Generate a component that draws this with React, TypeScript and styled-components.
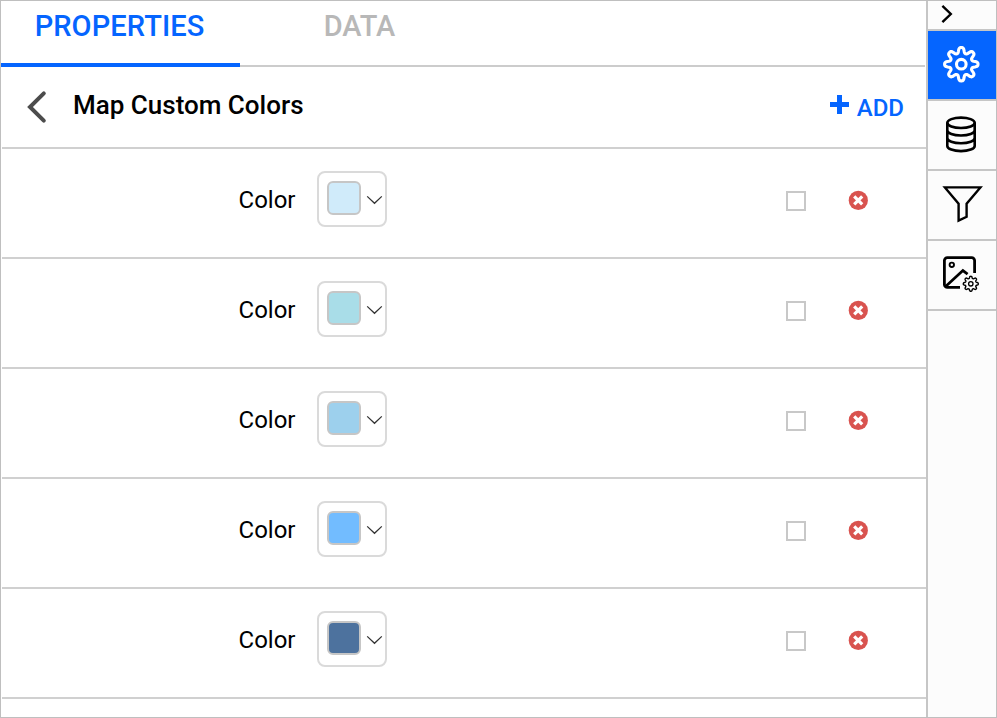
import React from 'react';
import styled, { createGlobalStyle } from 'styled-components';

const GlobalStyle = createGlobalStyle`
  * { box-sizing: border-box; }
  body { margin: 0; background: #fff; font-family: Roboto, "Open Sans", sans-serif; color: #000; }
  button { font: inherit; color: inherit; background: none; border: 0; padding: 0; margin: 0; cursor: pointer; }
  svg { display: block; flex: none; }
`;

const Frame = styled.div`
  display: flex;
  width: 997px;
  height: 718px;
  border: 1px solid #bfbfbf;
  overflow: hidden;
`;

const Panel = styled.main`
  width: 925px;
  flex: none;
  overflow: hidden;
`;

const Tabs = styled.nav`
  display: flex;
  width: 924px;
  height: 66px;
  background: linear-gradient(#ccc, #ccc) bottom / 100% 2px no-repeat;
`;

const Tab = styled.button<{ $active?: boolean }>`
  width: 239px;
  height: 66px;
  padding: ${p => (p.$active ? '0 2px 11px 0' : '0 0 11px 0')};
  border-bottom: ${p => (p.$active ? '4px solid #0565ff' : '4px solid transparent')};
  color: ${p => (p.$active ? '#0565ff' : '#b8b8b8')};
  font-size: 29px;
  line-height: 49px;
  font-weight: 500;
  letter-spacing: ${p => (p.$active ? '0.1px' : '0')};
`;

const Header = styled.header`
  display: flex;
  align-items: flex-start;
  height: 82px;
  margin-left: 1px;
  border-bottom: 2px solid #d0d0d0;
`;

const BackButton = styled.button`
  margin: 23px 0 0 24px;
`;

const Title = styled.h1`
  margin: 22px 0 0 25px;
  font-size: 26px;
  line-height: 32px;
  font-weight: 500;
  white-space: nowrap;
`;

const AddButton = styled.button`
  display: flex;
  align-items: flex-start;
  gap: 8px;
  margin: 26px 22px 0 auto;
  color: #0565ff;
  font-size: 24px;
  line-height: 30px;
  font-weight: 500;
`;

const PlusIcon = styled.svg`
  margin-top: 2px;
`;

const Rows = styled.ul`
  list-style: none;
  margin: 0 0 0 1px;
  padding: 0;
`;

const Row = styled.li`
  display: flex;
  align-items: flex-start;
  height: 110px;
  border-bottom: 2px solid #d0d0d0;
`;

const Label = styled.span`
  width: 294px;
  margin: 36px 21px 0 0;
  padding-right: 0.5px;
  text-align: right;
  font-size: 24px;
  line-height: 30px;
`;

const Picker = styled.button`
  display: flex;
  align-items: flex-start;
  width: 70px;
  height: 56px;
  margin-top: 22px;
  padding: 8px 0 0 8px;
  border: 2px solid #dadada;
  border-radius: 8px;
`;

const Swatch = styled.span<{ $color: string }>`
  width: 34px;
  height: 34px;
  border: 2px solid #c6c6c6;
  border-radius: 6px;
  background: ${p => p.$color};
`;

const Caret = styled.svg`
  margin: 13px 0 0 5px;
`;

const Checkbox = styled.input`
  appearance: none;
  width: 20px;
  height: 20px;
  margin: 42px 42px 0 auto;
  border: 2px solid #c8c8c8;
  background: #fff;
`;

const Remove = styled.button`
  margin: 41px 58px 0 0;
`;

const Sidebar = styled.aside`
  width: 70px;
  flex: none;
  border-left: 2px solid #c6c6c6;
  background: #fcfcfc;
`;

const Tool = styled.button<{ $active?: boolean; $short?: boolean }>`
  display: block;
  width: 68px;
  height: ${p => (p.$short ? 30 : 70)}px;
  border-bottom: 2px solid #c6c6c6;
  background: ${p => (p.$active ? '#0565ff' : '#fcfcfc')};
`;

const colors = ['#d0ebfa', '#a9dde8', '#9dd0ed', '#72bcff', '#4d729e'];

/* Outline of a gear with eight rounded teeth, centred on (cx, cy). */
function gearPath(cx: number, cy: number, mid: number, depth: number) {
  const points: string[] = [];
  for (let i = 0; i < 160; i++) {
    const a = (i / 160) * Math.PI * 2;
    const wave = Math.tanh(1.5 * Math.cos(8 * a)) / Math.tanh(1.5);
    const r = mid + depth * wave;
    points.push(`${(cx + r * Math.sin(a)).toFixed(2)} ${(cy - r * Math.cos(a)).toFixed(2)}`);
  }
  return `M${points.join('L')}Z`;
}

const line = { fill: 'none', stroke: 'currentColor' } as const;

const GearIcon = () => (
  <svg width="68" height="68" viewBox="0 0 68 68" color="#fff" {...line} strokeWidth="3.1" strokeLinejoin="round">
    <path d={gearPath(33.3, 33.2, 14, 2.7)} />
    <circle cx="33.3" cy="33.2" r="4.8" />
  </svg>
);

const DatabaseIcon = () => (
  <svg width="68" height="68" viewBox="0 0 68 68" {...line} strokeWidth="2.6">
    <ellipse cx="33" cy="21.8" rx="13.7" ry="5.2" />
    <path d="M19.3 21.8v23.1c0 2.9 6.1 5.2 13.7 5.2s13.7-2.3 13.7-5.2V21.8M19.3 29.3c0 2.9 6.1 5.2 13.7 5.2s13.7-2.3 13.7-5.2M19.3 37.1c0 2.9 6.1 5.2 13.7 5.2s13.7-2.3 13.7-5.2" />
  </svg>
);

const FilterIcon = () => (
  <svg width="68" height="68" viewBox="0 0 68 68" {...line} strokeWidth="2.4">
    <path d="M16.9 16.4H52.4L38.6 32.8V45.8L30.6 49.6V32.8Z" />
  </svg>
);

const ImageSettingsIcon = () => (
  <svg width="68" height="68" viewBox="0 0 68 68" {...line}>
    <path strokeWidth="2.8" d="M32 46.4H19.4a3 3 0 0 1-3-3V19.6a3 3 0 0 1 3-3H43.6a3 3 0 0 1 3 3V32" />
    <path strokeWidth="2.7" d="M17.6 45.6 34.9 29.6 39.6 33.1" />
    <circle cx="23.8" cy="23.8" r="2.2" strokeWidth="1.9" />
    <path strokeWidth="1.4" d={gearPath(42.8, 42.8, 6.5, 1)} />
    <circle cx="42.8" cy="42.8" r="2.2" strokeWidth="1.3" />
  </svg>
);

export default function App() {
  return (
    <>
      <GlobalStyle />
      <Frame>
        <Panel>
          <Tabs>
            <Tab $active>PROPERTIES</Tab>
            <Tab>DATA</Tab>
          </Tabs>
          <Header>
            <BackButton aria-label="Back">
              <svg width="22" height="34" viewBox="0 0 22 34" {...line} color="#4c4c4c" strokeWidth="4" strokeLinecap="round">
                <path d="M17.8 3.4 4 17 17.8 30.6" />
              </svg>
            </BackButton>
            <Title>Map Custom Colors</Title>
            <AddButton>
              <PlusIcon width="19" height="19" viewBox="0 0 19 19" {...line} strokeWidth="5">
                <path d="M9.5 0V19M0 9.5H19" />
              </PlusIcon>
              ADD
            </AddButton>
          </Header>
          <Rows>
            {colors.map(color => (
              <Row key={color}>
                <Label>Color</Label>
                <Picker aria-label="Choose color">
                  <Swatch $color={color} />
                  <Caret width="17" height="12" viewBox="0 0 17 12" {...line} color="#333" strokeWidth="1.3">
                    <path d="M1.2 2.4 8.5 9.3 15.8 2.4" />
                  </Caret>
                </Picker>
                <Checkbox type="checkbox" aria-label="Select" />
                <Remove aria-label="Remove">
                  <svg width="20" height="20" viewBox="0 0 20 20">
                    <circle cx="10.3" cy="10.4" r="9.6" fill="#d9534f" />
                    <path d="M6.2 6.3 14.2 14.3M14.2 6.3 6.2 14.3" stroke="#fff" strokeWidth="3.2" />
                  </svg>
                </Remove>
              </Row>
            ))}
          </Rows>
        </Panel>
        <Sidebar>
          <Tool $short aria-label="Collapse">
            <svg width="68" height="28" viewBox="0 0 68 28" {...line} strokeWidth="2.4">
              <path d="M14.4 4.8 22.8 13 14.4 21.2" />
            </svg>
          </Tool>
          <Tool $active aria-label="Properties"><GearIcon /></Tool>
          <Tool aria-label="Data"><DatabaseIcon /></Tool>
          <Tool aria-label="Filter"><FilterIcon /></Tool>
          <Tool aria-label="Image settings"><ImageSettingsIcon /></Tool>
        </Sidebar>
      </Frame>
    </>
  );
}
